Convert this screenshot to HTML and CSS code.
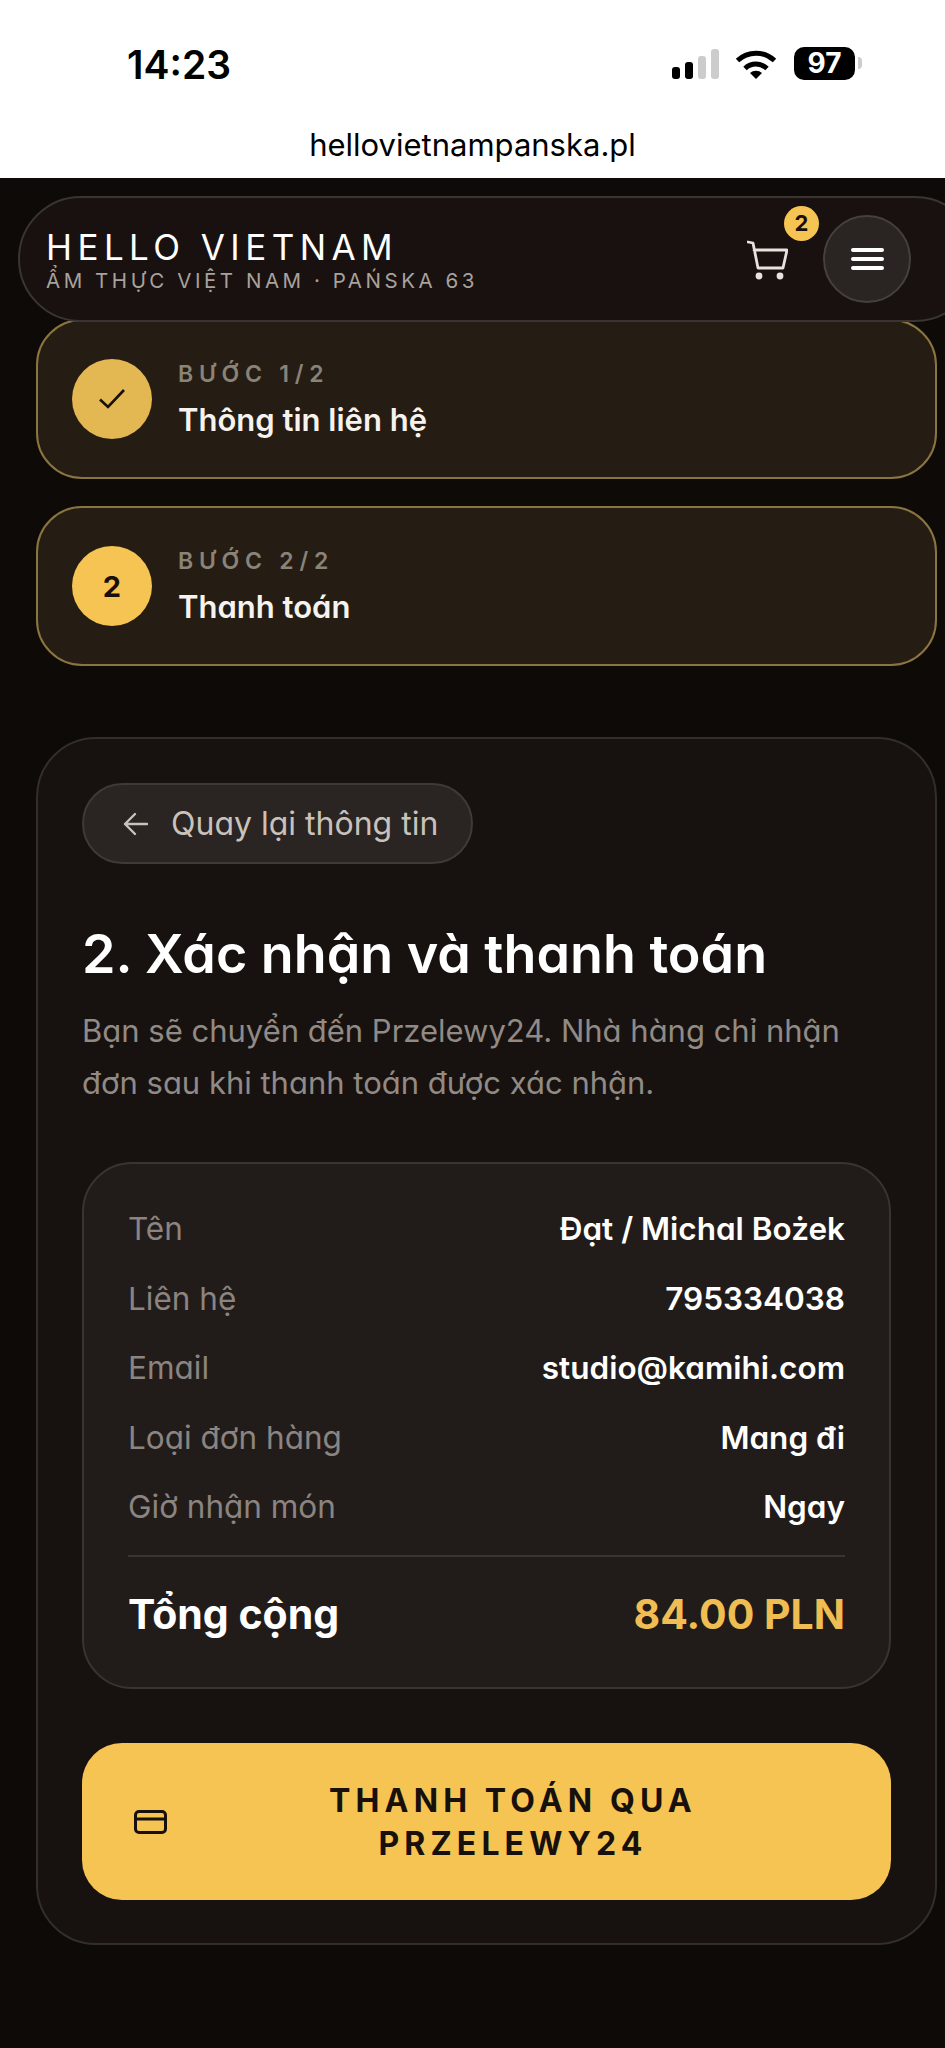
FILE: index.html
```html
<!DOCTYPE html>
<html lang="vi">
<head>
<meta charset="UTF-8">
<meta name="viewport" content="width=device-width, initial-scale=1.0">
<title>Hello Vietnam - Thanh toán</title>
<link rel="stylesheet" href="styles.css">
</head>
<body>
<div class="browser-top">
    <div class="status-bar">
        <span class="time">14:23</span>
        <div class="status-icons">
            <div class="signal">
                <span class="bar bar1"></span>
                <span class="bar bar2"></span>
                <span class="bar bar3"></span>
                <span class="bar bar4"></span>
            </div>
            <svg class="wifi" width="42" height="30" viewBox="0 0 42 30" fill="none" stroke="#000" stroke-width="5">
                <path d="M2.5 11.5A27 27 0 0 1 39.5 11.5"/>
                <path d="M10 19.5A16 16 0 0 1 32 19.5"/>
                <path d="M21 30L15 24A9 9 0 0 1 27 24Z" fill="#000" stroke="none"/>
            </svg>
            <div class="battery"><span class="battery-level">97</span></div>
            <span class="battery-nub"></span>
        </div>
    </div>
    <div class="url">hellovietnampanska.pl</div>
</div>

<div class="page">
    <header class="nav">
        <div class="brand">
            <div class="brand-name">HELLO VIETNAM</div>
            <div class="brand-sub">ẨM THỰC VIỆT NAM · PAŃSKA 63</div>
        </div>
        <div class="nav-actions">
            <div class="cart">
                <svg width="41" height="40" viewBox="0 0 41 40" fill="none" stroke="#e8e2dc" stroke-width="2.8" stroke-linejoin="round" stroke-linecap="round">
                    <path d="M1 2L6 3L11 28H36L40 10H7"/>
                    <circle cx="12" cy="36" r="3.4" fill="#e8e2dc" stroke="none"/>
                    <circle cx="33" cy="36" r="3.4" fill="#e8e2dc" stroke="none"/>
                </svg>
                <span class="cart-badge">2</span>
            </div>
            <button class="menu-btn" type="button" aria-label="Menu">
                <span></span><span></span><span></span>
            </button>
        </div>
    </header>

    <section class="steps">
        <div class="step">
            <div class="step-circle step-done">
                <svg width="28" height="22" viewBox="0 0 28 22" fill="none" stroke="#17100c" stroke-width="2.6">
                    <path d="M2 11.5L10 19L26 2"/>
                </svg>
            </div>
            <div>
                <div class="step-label">BƯỚC 1/2</div>
                <div class="step-title">Thông tin liên hệ</div>
            </div>
        </div>
        <div class="step">
            <div class="step-circle">2</div>
            <div>
                <div class="step-label">BƯỚC 2/2</div>
                <div class="step-title">Thanh toán</div>
            </div>
        </div>
    </section>

    <main class="card">
        <button class="back-btn" type="button">
            <svg width="26" height="26" viewBox="0 0 26 26" fill="none" stroke="#c9c2bc" stroke-width="2.4" stroke-linecap="round" stroke-linejoin="round">
                <path d="M24 13H2M12 3L2 13L12 23"/>
            </svg>
            Quay lại thông tin
        </button>

        <h1>2. Xác nhận và thanh toán</h1>
        <p class="desc">Bạn sẽ chuyển đến Przelewy24. Nhà hàng chỉ nhận đơn sau khi thanh toán được xác nhận.</p>

        <div class="summary">
            <div class="row"><span class="row-key">Tên</span><span class="row-val">Đạt / Michal Bożek</span></div>
            <div class="row"><span class="row-key">Liên hệ</span><span class="row-val">795334038</span></div>
            <div class="row"><span class="row-key">Email</span><span class="row-val">studio@kamihi.com</span></div>
            <div class="row"><span class="row-key">Loại đơn hàng</span><span class="row-val">Mang đi</span></div>
            <div class="row"><span class="row-key">Giờ nhận món</span><span class="row-val">Ngay</span></div>
            <div class="total">
                <span>Tổng cộng</span>
                <span class="total-val">84.00 PLN</span>
            </div>
        </div>

        <button class="pay-btn" type="button">
            <svg width="33" height="24" viewBox="0 0 33 24" fill="none" stroke="#17100c" stroke-width="3" stroke-linejoin="round">
                <rect x="1.5" y="1.5" width="30" height="21" rx="3.5"/>
                <path d="M1.5 9H31.5"/>
            </svg>
            <span class="pay-text">THANH TOÁN QUA PRZELEWY24</span>
        </button>
    </main>
</div>
</body>
</html>
```

FILE: styles.css
```css
* {
    box-sizing: border-box;
}

html, body {
    margin: 0;
    padding: 0;
}

body {
    width: 945px;
    height: 2048px;
    overflow: hidden;
    font-family: Inter, "Noto Sans", sans-serif;
    font-feature-settings: "cv11" 1;
    background-color: #0e0a08;
    color: #fff;
}

/* phone + browser chrome */
.browser-top {
    height: 178px;
    background-color: #fff;
    color: #000;
    font-feature-settings: normal;
}

.status-bar {
    height: 122px;
    padding: 46px 83px 0 127px;
    display: flex;
    justify-content: space-between;
    align-items: flex-start;
}

.time {
    font-size: 39px;
    font-weight: 600;
    line-height: 37px;
}

.status-icons {
    display: flex;
    align-items: flex-end;
    height: 34px;
}

.signal {
    display: flex;
    align-items: flex-end;
    gap: 5px;
    margin-right: 16px;
    margin-bottom: 1px;
}

.bar {
    width: 8px;
    border-radius: 3px;
    background-color: #000;
}

.bar1 { height: 12px; }
.bar2 { height: 17px; }
.bar3 { height: 23px; background-color: #ccc; }
.bar4 { height: 30px; background-color: #ccc; }

.wifi {
    margin-right: 17px;
    margin-bottom: 1px;
}

.battery {
    width: 61px;
    height: 33px;
    border-radius: 10px;
    background-color: #000;
    color: #fff;
    font-size: 28px;
    font-weight: 700;
    line-height: 33px;
    text-align: center;
}

.battery-nub {
    width: 4px;
    height: 12px;
    margin: 0 0 11px 3px;
    border-radius: 0 4px 4px 0;
    background-color: #ccc;
}

.url {
    text-align: center;
    font-size: 31px;
    line-height: 46px;
}

/* site */
.page {
    padding: 0 8px 0 36px;
}

.nav {
    position: relative;
    z-index: 2;
    width: 960px;
    height: 126px;
    margin: 18px 0 0 -18px;
    padding: 0 65px 0 26px;
    display: flex;
    justify-content: space-between;
    align-items: center;
    background-color: #18110f;
    border: 2px solid #3a3532;
    border-radius: 63px;
}

.brand-name {
    font-size: 35px;
    font-weight: 400;
    line-height: 42px;
    letter-spacing: 0.155em;
    white-space: nowrap;
}

.brand-sub {
    margin-top: 1px;
    font-size: 20.5px;
    font-weight: 400;
    line-height: 24px;
    letter-spacing: 0.173em;
    color: #a9a29c;
    white-space: nowrap;
}

.nav-actions {
    display: flex;
    align-items: center;
    gap: 35px;
}

.cart {
    position: relative;
    width: 41px;
    height: 40px;
    margin-top: 2px;
}

.cart svg {
    display: block;
}

.cart-badge {
    position: absolute;
    top: -34px;
    left: 37px;
    width: 35px;
    height: 35px;
    border-radius: 50%;
    background-color: #f5c453;
    color: #17100c;
    font-size: 22px;
    font-weight: 700;
    line-height: 35px;
    text-align: center;
}

.menu-btn {
    width: 88px;
    height: 88px;
    padding: 0;
    display: flex;
    flex-direction: column;
    justify-content: center;
    align-items: center;
    gap: 5.5px;
    background-color: #2a2523;
    border: 2px solid #45403d;
    border-radius: 50%;
}

.menu-btn span {
    width: 33px;
    height: 3.5px;
    border-radius: 2px;
    background-color: #fff;
}

.steps {
    display: flex;
    flex-direction: column;
    gap: 27px;
    margin-top: -3px;
}

.step {
    height: 160px;
    padding: 0 34px;
    display: flex;
    align-items: center;
    gap: 26px;
    background-color: #251d14;
    border: 2px solid #8a7440;
    border-radius: 46px;
}

.step-circle {
    width: 80px;
    height: 80px;
    flex-shrink: 0;
    display: flex;
    justify-content: center;
    align-items: center;
    border-radius: 50%;
    background-color: #f5c453;
    color: #17100c;
    font-size: 29px;
    font-weight: 700;
}

.step-done {
    background-color: #e3b751;
}

.step-label {
    font-size: 23px;
    font-weight: 600;
    line-height: 28px;
    letter-spacing: 0.25em;
    color: #8a8378;
}

.step-title {
    margin-top: 13px;
    font-size: 31px;
    font-weight: 600;
    line-height: 38px;
    color: #f6f3ef;
}

.card {
    height: 1208px;
    margin-top: 71px;
    padding: 44px;
    background-color: #171210;
    border: 2px solid #332e2b;
    border-radius: 60px;
}

.back-btn {
    width: 391px;
    height: 81px;
    padding: 0 0 0 39px;
    display: flex;
    align-items: center;
    gap: 22px;
    background-color: #2a2422;
    border: 2px solid #3f3a37;
    border-radius: 41px;
    color: #c9c2bc;
    font-family: inherit;
    font-feature-settings: inherit;
    font-size: 32px;
    white-space: nowrap;
}

h1 {
    margin: 55px 0 0;
    font-size: 53.8px;
    font-weight: 600;
    line-height: 70px;
    white-space: nowrap;
}

.desc {
    width: 790px;
    margin: 16px 0 0;
    font-size: 31px;
    line-height: 52px;
    color: #918a85;
}

.summary {
    height: 527px;
    margin-top: 53px;
    padding: 30px 44px 0;
    background-color: #211c1a;
    border: 2px solid #393431;
    border-radius: 50px;
}

.row {
    height: 69.5px;
    display: flex;
    justify-content: space-between;
    align-items: center;
    font-size: 31.5px;
}

.row-key {
    color: #8b8480;
}

.row-val {
    font-size: 31.5px;
    font-weight: 600;
}

.total {
    margin-top: 13px;
    padding-top: 30px;
    display: flex;
    justify-content: space-between;
    align-items: center;
    border-top: 2px solid #3a3532;
    font-size: 41px;
    font-weight: 700;
    line-height: 54px;
}

.total-val {
    color: #efbd52;
}

.pay-btn {
    width: 809px;
    height: 157px;
    margin-top: 54px;
    padding: 0 52px;
    display: flex;
    align-items: center;
    gap: 20px;
    background-color: #f5c453;
    border: none;
    border-radius: 40px;
    color: #17100c;
    font-family: inherit;
    font-feature-settings: inherit;
}

.pay-btn svg {
    flex-shrink: 0;
}

.pay-text {
    width: 580px;
    margin: 0 auto;
    font-size: 32px;
    font-weight: 700;
    line-height: 43px;
    letter-spacing: 0.16em;
    text-align: center;
}
```
